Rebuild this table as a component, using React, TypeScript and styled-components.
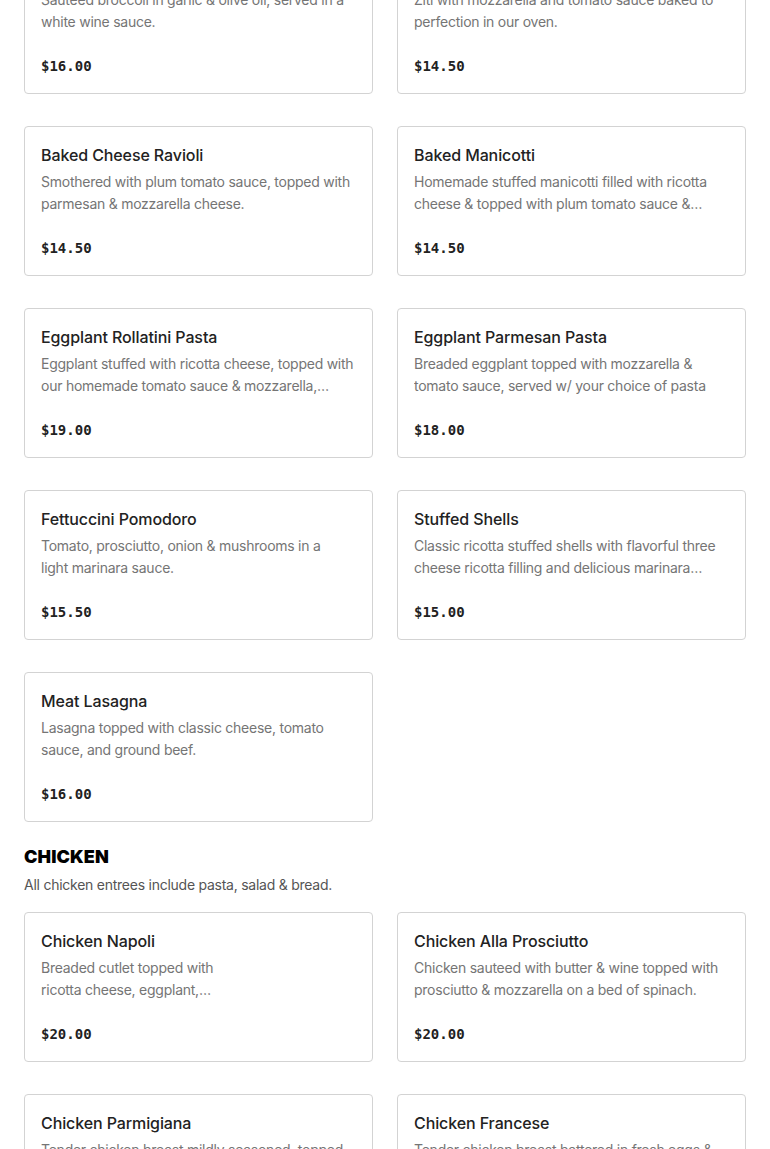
import styled, { createGlobalStyle } from 'styled-components';

const GlobalStyle = createGlobalStyle`
  html, body {
    margin: 0;
    padding: 0;
    background: #fff;
    font-family: Inter, 'Noto Sans', sans-serif;
    overflow: hidden;
  }
`;

// the shot is taken part way down the menu, so the first row is cut off
const Page = styled.div`
  margin-top: -56px;
  padding: 0 24px;
`;

const Grid = styled.div`
  display: grid;
  grid-template-columns: 1fr 1fr;
  column-gap: 24px;
  row-gap: 32px;
`;

const Section = styled.section`
  padding-top: 24px;
  .heading {
    margin: 0;
    font-size: 18px;
    line-height: 22px;
    font-weight: 900;
    color: #000;
    letter-spacing: 0.1px;
    text-transform: uppercase;
  }
  .note {
    margin: 6px 0 16px;
    font-size: 14px;
    line-height: 22px;
    color: #555;
    letter-spacing: -0.25px;
  }
`;

const Card = styled.div`
  height: 150px;
  box-sizing: border-box;
  border: 1px solid #d3d3d3;
  border-radius: 4px;
  padding: 16px 16px 17px;
  display: flex;
  flex-direction: column;
  background: #fff;
`;

const Title = styled.div`
  font-size: 16px;
  line-height: 24px;
  font-weight: 500;
  color: #222;
  letter-spacing: -0.1px;
`;

const Desc = styled.div<{ $narrow?: boolean }>`
  margin-top: 4px;
  font-size: 14px;
  line-height: 22px;
  color: #757575;
  letter-spacing: -0.25px;
  max-width: ${(p) => (p.$narrow ? '200px' : 'none')};
  display: -webkit-box;
  -webkit-line-clamp: 2;
  -webkit-box-orient: vertical;
  overflow: hidden;
`;

const Price = styled.div`
  margin-top: auto;
  font-family: 'DejaVu Sans Mono', 'Liberation Mono', monospace;
  font-weight: 700;
  font-size: 14px;
  line-height: 20px;
  color: #222;
`;

type Item = { name: string; desc: string; price: string; narrow?: boolean };

const pasta: Item[] = [
  {
    name: 'Broccoli Aglio e Olio',
    desc: 'Sauteed broccoli in garlic & olive oil, served in a white wine sauce.',
    price: '$16.00',
  },
  {
    name: 'Baked Ziti',
    desc: 'Ziti with mozzarella and tomato sauce baked to perfection in our oven.',
    price: '$14.50',
  },
  {
    name: 'Baked Cheese Ravioli',
    desc: 'Smothered with plum tomato sauce, topped with parmesan & mozzarella cheese.',
    price: '$14.50',
  },
  {
    name: 'Baked Manicotti',
    desc: 'Homemade stuffed manicotti filled with ricotta cheese & topped with plum tomato sauce & mozzarella cheese.',
    price: '$14.50',
  },
  {
    name: 'Eggplant Rollatini Pasta',
    desc: 'Eggplant stuffed with ricotta cheese, topped with our homemade tomato sauce & mozzarella, served w/ pasta.',
    price: '$19.00',
  },
  {
    name: 'Eggplant Parmesan Pasta',
    desc: 'Breaded eggplant topped with mozzarella & tomato sauce, served w/ your choice of pasta',
    price: '$18.00',
  },
  {
    name: 'Fettuccini Pomodoro',
    desc: 'Tomato, prosciutto, onion & mushrooms in a light\u00a0marinara sauce.',
    price: '$15.50',
  },
  {
    name: 'Stuffed Shells',
    desc: 'Classic ricotta stuffed shells with flavorful three cheese ricotta filling and delicious marinara sauce.',
    price: '$15.00',
  },
  {
    name: 'Meat Lasagna',
    desc: 'Lasagna topped with classic cheese, tomato sauce, and ground beef.',
    price: '$16.00',
  },
];

const chicken: Item[] = [
  {
    name: 'Chicken Napoli',
    desc: 'Breaded cutlet topped with ricotta cheese, eggplant, tomato sauce & mozzarella.',
    price: '$20.00',
    narrow: true,
  },
  {
    name: 'Chicken Alla Prosciutto',
    desc: 'Chicken sauteed with butter & wine topped with prosciutto & mozzarella on a bed of spinach.',
    price: '$20.00',
  },
  {
    name: 'Chicken Parmigiana',
    desc: 'Tender chicken breast mildly seasoned, topped in tomato sauce & melted mozzarella.',
    price: '$20.00',
  },
  {
    name: 'Chicken Francese',
    desc: 'Tender chicken breast battered in fresh eggs & sauteed in a lemon butter wine sauce.',
    price: '$20.00',
  },
];

const MenuCard = ({ item }: { item: Item }) => (
  <Card>
    <Title>{item.name}</Title>
    <Desc $narrow={item.narrow}>{item.desc}</Desc>
    <Price>{item.price}</Price>
  </Card>
);

const App = () => {
  return (
    <>
      <GlobalStyle />
      <Page>
        <Grid>
          {pasta.map((item) => (
            <MenuCard key={item.name} item={item} />
          ))}
        </Grid>
        <Section>
          <h2 className='heading'>Chicken</h2>
          <p className='note'>All chicken entrees include pasta, salad &amp; bread.</p>
          <Grid>
            {chicken.map((item) => (
              <MenuCard key={item.name} item={item} />
            ))}
          </Grid>
        </Section>
      </Page>
    </>
  );
};

export default App;
